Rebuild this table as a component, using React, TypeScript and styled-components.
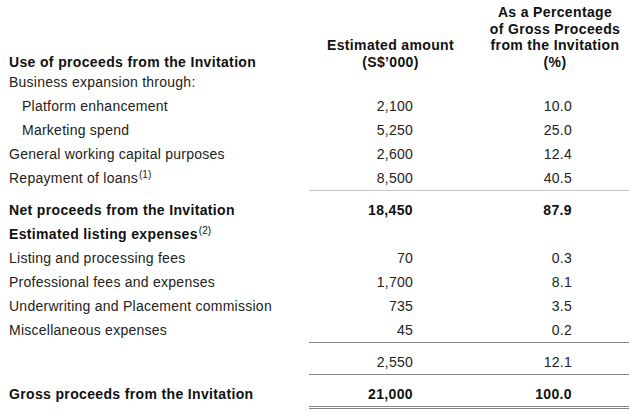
import React from "react";
import styled, { createGlobalStyle } from "styled-components";

type Align = "left" | "right" | "center";
type RuleKind = "light" | "single" | "double";

interface Line {
  label: React.ReactNode;
  amount?: string;
  pct?: string;
  bold?: boolean;
  indent?: boolean;
}

const GlobalStyle = createGlobalStyle`
  html, body {
    margin: 0;
    padding: 0;
    background: #ffffff;
  }
  body {
    font-family: "Liberation Sans", Arial, sans-serif;
    font-size: 14px;
    color: #222222;
  }
`;

const Table = styled.div`
  width: 629px;
  padding: 4px 0 0 9px;
  box-sizing: border-box;
`;

const Row = styled.div<{ $head?: boolean }>`
  display: grid;
  grid-template-columns: 300px 163px 157px;
  align-items: ${(p) => (p.$head ? "end" : "center")};
  height: ${(p) => (p.$head ? "66px" : "24px")};
  line-height: ${(p) => (p.$head ? "16.7px" : "24px")};
`;

const Cell = styled.div<{ $align?: Align; $bold?: boolean; $indent?: boolean; $padRight?: number; $padLeft?: number }>`
  text-align: ${(p) => p.$align || "left"};
  font-weight: ${(p) => (p.$bold ? 700 : 400)};
  color: ${(p) => (p.$bold ? "#111111" : "#222222")};
  letter-spacing: ${(p) => (p.$bold ? "0.35px" : "0.25px")};
  padding-left: ${(p) => (p.$indent ? 13 : p.$padLeft || 0)}px;
  padding-right: ${(p) => p.$padRight || 0}px;
  white-space: nowrap;
`;

const Sup = styled.sup`
  font-size: 10px;
  font-weight: 400;
  line-height: 0;
  vertical-align: 5px;
  letter-spacing: 0;
  margin-left: 1px;
`;

const RuleRow = styled.div`
  display: grid;
  grid-template-columns: 300px 320px;
  margin-bottom: 7px;
`;

const Rule = styled.div<{ $kind: RuleKind }>`
  grid-column: 2;
  height: ${(p) => (p.$kind === "double" ? "1px" : "0")};
  border-top: 1px solid ${(p) => (p.$kind === "light" ? "#c8c8c8" : "#858585")};
  border-bottom: ${(p) => (p.$kind === "double" ? "1px solid #858585" : "none")};
`;

const useRows: Line[] = [
  { label: "Business expansion through:" },
  { label: "Platform enhancement", amount: "2,100", pct: "10.0", indent: true },
  { label: "Marketing spend", amount: "5,250", pct: "25.0", indent: true },
  { label: "General working capital purposes", amount: "2,600", pct: "12.4" },
  {
    label: (
      <>
        Repayment of loans<Sup>(1)</Sup>
      </>
    ),
    amount: "8,500",
    pct: "40.5",
  },
];

const expenseRows: Line[] = [
  { label: "Net proceeds from the Invitation", amount: "18,450", pct: "87.9", bold: true },
  {
    label: (
      <>
        Estimated listing expenses<Sup>(2)</Sup>
      </>
    ),
    bold: true,
  },
  { label: "Listing and processing fees", amount: "70", pct: "0.3" },
  { label: "Professional fees and expenses", amount: "1,700", pct: "8.1" },
  { label: "Underwriting and Placement commission", amount: "735", pct: "3.5" },
  { label: "Miscellaneous expenses", amount: "45", pct: "0.2" },
];

const DataRow = ({ line }: { line: Line }) => (
  <Row>
    <Cell $bold={line.bold} $indent={line.indent}>
      {line.label}
    </Cell>
    <Cell $align="right" $bold={line.bold} $padRight={59}>
      {line.amount}
    </Cell>
    <Cell $align="right" $bold={line.bold} $padRight={57}>
      {line.pct}
    </Cell>
  </Row>
);

const App = () => {
  return (
    <>
      <GlobalStyle />
      <Table>
        <Row $head>
          <Cell $bold>Use of proceeds from the Invitation</Cell>
          <Cell $bold $align="center">
            Estimated amount
            <br />
            (S$’000)
          </Cell>
          <Cell $bold $align="center" $padLeft={9}>
            As a Percentage
            <br />
            of Gross Proceeds
            <br />
            from the Invitation
            <br />
            (%)
          </Cell>
        </Row>

        {useRows.map((line, i) => (
          <DataRow key={i} line={line} />
        ))}
        <RuleRow>
          <Rule $kind="light" />
        </RuleRow>

        {expenseRows.map((line, i) => (
          <DataRow key={i} line={line} />
        ))}
        <RuleRow>
          <Rule $kind="single" />
        </RuleRow>

        <DataRow line={{ label: "", amount: "2,550", pct: "12.1" }} />
        <RuleRow>
          <Rule $kind="single" />
        </RuleRow>

        <DataRow line={{ label: "Gross proceeds from the Invitation", amount: "21,000", pct: "100.0", bold: true }} />
        <RuleRow>
          <Rule $kind="double" />
        </RuleRow>
      </Table>
    </>
  );
};

export default App;
